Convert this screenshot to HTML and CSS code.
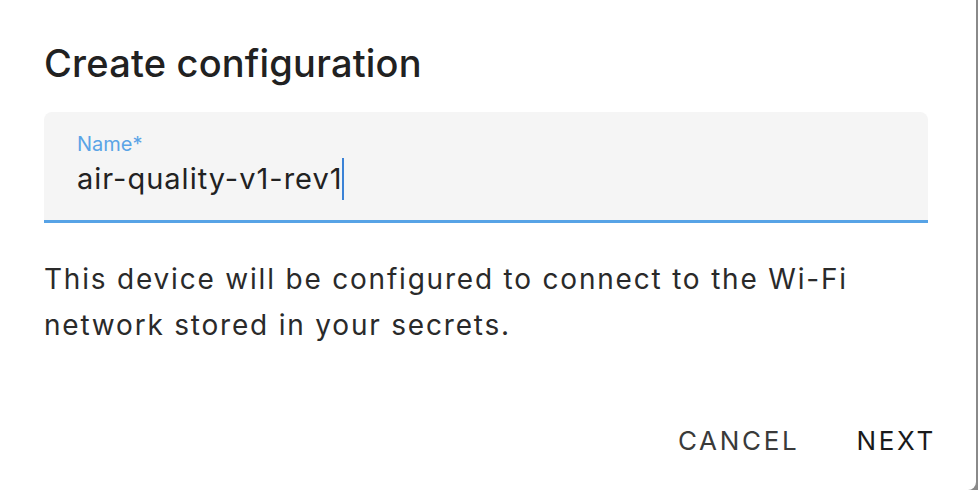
FILE: index.html
```html
<!DOCTYPE html>
<html lang="en">
<head>
<meta charset="utf-8">
<title>Create configuration</title>
<link rel="stylesheet" href="styles.css">
</head>
<body>
<div class="dialog">
  <h2 class="title">Create configuration</h2>
  <div class="field">
    <label class="label">Name*</label>
    <div class="value">air-quality-v1-rev1<span class="caret"></span></div>
  </div>
  <p class="text">This device will be configured to connect to the Wi-Fi network stored in your secrets.</p>
  <div class="actions">
    <button class="btn btn-cancel">CANCEL</button>
    <button class="btn btn-next">NEXT</button>
  </div>
</div>
</body>
</html>
```
FILE: styles.css
```css
html, body {
  margin: 0;
  padding: 0;
  height: 100%;
}
body {
  background: #8a8a8a;
  font-family: Inter, "Noto Sans", sans-serif;
  overflow: hidden;
}
.dialog {
  width: 976px;
  height: 490px;
  background: #ffffff;
  border-radius: 0 0 8px 0;
  box-sizing: border-box;
  padding: 0 48px 0 44px;
  display: flex;
  flex-direction: column;
}
.title {
  margin: 38px 0 0;
  font-size: 38px;
  line-height: 50px;
  font-weight: 500;
  letter-spacing: 0.2px;
  color: #212121;
}
.field {
  margin-top: 24px;
  height: 111px;
  background: #f5f5f5;
  border-radius: 8px 8px 0 0;
  border-bottom: 3px solid #57a3e6;
  box-sizing: border-box;
  padding: 18px 33px 0;
}
.label {
  display: block;
  font-size: 20px;
  line-height: 28px;
  color: #5aa4e6;
}
.value {
  font-size: 29px;
  line-height: 42px;
  letter-spacing: 1px;
  color: #222;
}
.caret {
  display: inline-block;
  width: 2px;
  height: 42px;
  background: #3b82d6;
  vertical-align: top;
  margin-left: -1px;
}
.text {
  margin: 33px 0 0;
  font-size: 28px;
  line-height: 46px;
  letter-spacing: 1.8px;
  color: #2a2a2a;
}
.actions {
  margin-top: auto;
  margin-bottom: 32px;
  display: flex;
  justify-content: flex-end;
  gap: 57px;
  margin-right: -8px;
}
.btn {
  background: none;
  border: 0;
  padding: 0;
  font-family: inherit;
  font-size: 26px;
  letter-spacing: 2.7px;
  line-height: 34px;
  font-weight: 400;
}
.btn-cancel { color: #3a3a3a; }
.btn-next { color: #1a1a1a; }
```
